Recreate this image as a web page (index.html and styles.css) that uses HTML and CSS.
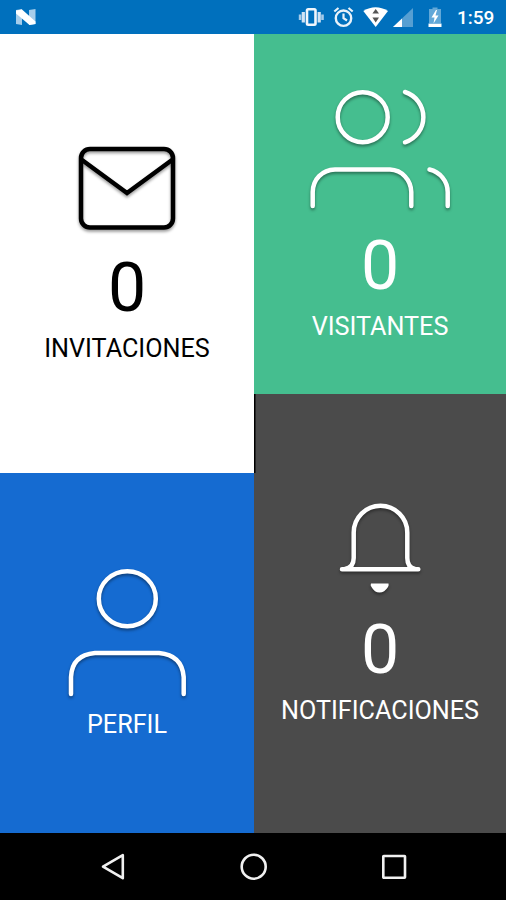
FILE: index.html
```html
<!DOCTYPE html>
<html lang="es">

<head>
    <meta charset="UTF-8">
    <meta name="viewport" content="width=device-width, initial-scale=1.0">
    <title>Inicio</title>
    <link rel="stylesheet" href="styles.css">
</head>

<body>
    <header class="status-bar">
        <svg class="logo" width="22" height="24" viewBox="0 0 22 24">
            <path d="M1 5L7 4V20L1 19ZM14 5L20.500 4V19L14 20Z" fill="#a5cdeb"/>
            <path d="M1 5.500L7 4.500L20.500 16.500V19L14.500 20L1 8.500Z" fill="#fff"/>
        </svg>
        <div class="status-icons">
            <svg class="vibrate" width="26" height="24" viewBox="0 0 26 24">
                <rect x="8" y="4.300" width="8.500" height="15.400" rx="1.200" fill="none" stroke="#f0f6fc" stroke-width="2.600"/>
                <path d="M4.300 7V17.500M20.200 7V17.500" stroke="#d0e3f4" stroke-width="3.200"/>
                <path d="M1.100 9.500V15M23.500 9.500V15" stroke="#a5cbea" stroke-width="2.600"/>
            </svg>
            <svg class="alarm" width="22" height="24" viewBox="0 0 22 24">
                <circle cx="10.500" cy="13.200" r="7.700" fill="none" stroke="#e8f2fa" stroke-width="2.400"/>
                <path d="M1.300 6.500L5.500 3M19.700 6.500L15.500 3M10.500 8.500V13.200L14 15.500" fill="none" stroke="#e8f2fa" stroke-width="2.200"/>
            </svg>
            <svg class="wifi" width="26" height="24" viewBox="0 0 26 24">
                <path d="M.3 6Q12.500-1.500 25 6L12.700 22Z" fill="#fff"/>
                <path d="M12.700 4L16 8.500H9.400ZM12.700 17.500L9.400 12.500H16Z" fill="#555"/>
            </svg>
            <svg class="signal" width="22" height="24" viewBox="0 0 22 24">
                <path d="M0 22L20 3V22Z" fill="#569fd2"/>
                <path d="M0 22L9 13.500V22Z" fill="#fff"/>
            </svg>
            <svg class="battery" width="14" height="24" viewBox="0 0 14 24">
                <path d="M0 4H3.500V2.500H8.500V4H12V18H0Z" fill="#62a8d8"/>
                <path d="M-.5 18.500H12.500V22H-.5Z" fill="#fff"/>
                <path d="M7 5L2.500 12.500H5.500L4.500 18.500L9.500 10.500H6.500L8 5Z" fill="#fff"/>
            </svg>
            <span class="time">1:59</span>
        </div>
    </header>

    <main class="tiles">
        <div class="column">
            <section class="tile invitaciones">
                <svg class="icon" width="98" height="84" viewBox="0 0 98 84">
                    <rect x="3" y="3" width="92" height="78.500" rx="9"/>
                    <path d="M4 14L49 47L94 14"/>
                </svg>
                <div class="count">0</div>
                <div class="label">INVITACIONES</div>
            </section>
            <section class="tile perfil">
                <svg class="icon" width="122" height="130" viewBox="0 0 122 130">
                    <ellipse cx="61.300" cy="30.700" rx="28.500" ry="27.500"/>
                    <path d="M5 126V109Q6 87 29 85H93Q116 87 117.700 109V126"/>
                </svg>
                <div class="label">PERFIL</div>
            </section>
        </div>
        <div class="column">
            <section class="tile visitantes">
                <svg class="icon" width="144" height="122" viewBox="0 0 144 122">
                    <circle cx="54.700" cy="29.200" r="25"/>
                    <path d="M97 4A26.400 26.400 0 0 1 97 54.300"/>
                    <path d="M4.700 118V104C5 91 14 82 27 81.500H82C94 82 103 92 103.300 104V118"/>
                    <path d="M121.500 81.500C132 84 139.700 93 139.700 104V118"/>
                </svg>
                <div class="count">0</div>
                <div class="label">VISITANTES</div>
            </section>
            <section class="tile notificaciones">
                <svg class="icon" width="84" height="94" viewBox="0 0 84 94">
                    <path d="M4 67.300H80.300M7 67C13 66 15.700 62 15.700 56V30.500A26.800 26.800 0 0 1 69.300 30.500V56C69.300 62 72 66 77 67"/>
                    <path class="clapper" d="M33 81.500H50.500Q51 83 50 85Q46.500 90.500 41.500 90.500Q36.500 90.500 33.500 85Q32 83 33 81.500Z"/>
                </svg>
                <div class="count">0</div>
                <div class="label">NOTIFICACIONES</div>
            </section>
        </div>
    </main>

    <nav class="nav-bar">
        <svg width="28" height="28" viewBox="0 0 28 28">
            <path d="M3 13.700L22.800 2.200V25.200Z"/>
        </svg>
        <svg width="28" height="28" viewBox="0 0 28 28">
            <circle cx="13.700" cy="13.700" r="12"/>
        </svg>
        <svg width="28" height="28" viewBox="0 0 28 28">
            <rect x="3.300" y="3" width="21.700" height="21.700" rx=".5"/>
        </svg>
    </nav>
</body>

</html>
```
FILE: styles.css
```css
html,
body {
    height: 100%;
    margin: 0;
}

body {
    display: flex;
    flex-direction: column;
    overflow: hidden;
    font-family: Roboto, sans-serif;
    background: #000;
}

/* Status bar */
.status-bar {
    height: 34px;
    box-sizing: border-box;
    padding: 0 11px 0 15px;
    display: flex;
    justify-content: space-between;
    align-items: center;
    background: #0070bd;
    color: #fff;
}

.status-icons {
    display: flex;
    align-items: center;
}

.status-icons svg {
    overflow: visible;
}

.vibrate,
.alarm {
    margin-right: 8px;
}

.wifi {
    margin-right: 4px;
}

.signal,
.battery {
    margin-right: 14px;
}

.time {
    width: 38px;
    font-size: 19px;
    font-weight: 500;
    line-height: 34px;
    padding-top: 2px;
    white-space: nowrap;
}

/* Tiles */
.tiles {
    flex: 1;
    display: grid;
    grid-template-columns: 254px 1fr;
}

.column {
    display: flex;
    flex-direction: column;
}

.tile {
    box-sizing: border-box;
    display: flex;
    flex-direction: column;
    align-items: center;
    color: #fff;
}

.icon {
    flex: none;
    overflow: visible;
    fill: none;
    stroke: currentColor;
    stroke-width: 4.5;
    stroke-linecap: round;
    filter: drop-shadow(0 2px 1.5px rgba(0, 0, 0, 0.4));
}

.clapper {
    fill: currentColor;
    stroke: none;
}

.count {
    margin-top: 26px;
    font-size: 68px;
    line-height: 60px;
}

.label {
    margin-top: 16px;
    font-size: 25.2px;
    line-height: 30px;
}

.invitaciones {
    height: 439px;
    padding-top: 112px;
    background: #fff;
    color: #000;
}

.invitaciones .count {
    margin-top: 28px;
}

.perfil {
    flex: 1;
    padding-top: 95px;
    background: #156bd1;
}

.perfil .label {
    margin-top: 12px;
}

.visitantes {
    height: 360px;
    padding-top: 54px;
    background: #45be8f;
}

.notificaciones {
    flex: 1;
    padding-top: 108px;
    background: linear-gradient(#000, #000) no-repeat 0 0 / 1.5px 79px, #4b4b4b;
}

.notificaciones .count {
    margin-top: 24px;
}

/* Navigation bar */
.nav-bar {
    height: 67px;
    box-sizing: border-box;
    padding-left: 2px;
    display: flex;
    justify-content: center;
    align-items: center;
    gap: 112px;
    background: #000;
}

.nav-bar svg {
    fill: none;
    stroke: #f0f0f0;
    stroke-width: 2.6;
    stroke-linejoin: round;
}
```
